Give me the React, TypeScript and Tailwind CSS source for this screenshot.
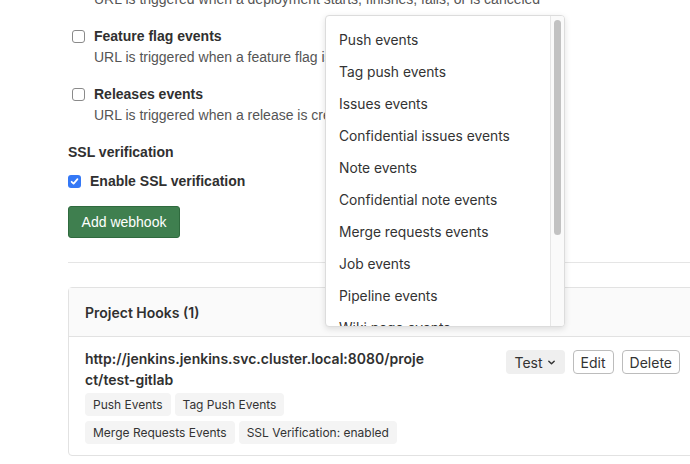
import React from 'react';

const formFont = { fontFamily: '"Liberation Sans", Arial, sans-serif' };
const uiFont = { fontFamily: 'Inter, "Liberation Sans", sans-serif' };

const triggerOptions = [
  'Push events',
  'Tag push events',
  'Issues events',
  'Confidential issues events',
  'Note events',
  'Confidential note events',
  'Merge requests events',
  'Job events',
  'Pipeline events',
  'Wiki page events',
];

const hookTags = [
  ['Push Events', 'Tag Push Events'],
  ['Merge Requests Events', 'SSL Verification: enabled'],
];

function Checkbox({ checked }: { checked?: boolean }) {
  if (checked) {
    return (
      <span className="flex h-[13px] w-[13px] shrink-0 items-center justify-center rounded-[3px] bg-[#3478f6]">
        <svg width="9" height="9" viewBox="0 0 10 10" fill="none">
          <path d="M1.8 5.3 4 7.4 8.3 2.4" stroke="white" strokeWidth="1.9" strokeLinecap="round" strokeLinejoin="round" />
        </svg>
      </span>
    );
  }
  return <span className="block h-[13px] w-[13px] shrink-0 rounded-[3px] border border-[#8a8a8a] bg-white" />;
}

function TriggerOption({ title, description }: { title: string; description: string }) {
  return (
    <div className="mt-[17px]">
      <div className="flex h-5 items-center gap-[9px] pl-1">
        <Checkbox />
        <span className="text-[14px] font-bold text-[#303030]">{title}</span>
      </div>
      <p className="mt-px pl-[26px] text-[14px] leading-5 text-[#555]">{description}</p>
    </div>
  );
}

function EventsMenu() {
  return (
    <div
      className="absolute left-[325px] top-[15px] flex h-[312px] w-[240px] overflow-hidden rounded-[4px] border border-[#dcdcdc] bg-white shadow-[0_2px_6px_rgba(0,0,0,0.12)]"
      style={uiFont}
    >
      <ul className="flex-1 pt-[8px]">
        {triggerOptions.map((opt) => (
          <li key={opt} className="flex h-8 items-center pl-[13px] text-[13.8px] text-[#333]">
            {opt}
          </li>
        ))}
      </ul>
      <div className="w-[14px] shrink-0 border-l border-[#e6e6e6] bg-[#fafafa] px-[3px] pt-1">
        <div className="h-[215px] rounded-full bg-[#c2c2c2]" />
      </div>
    </div>
  );
}

export default function App() {
  return (
    <div className="relative h-[464px] w-[690px] overflow-hidden bg-white" style={formFont}>
      <div className="-mt-[11px] ml-[68px] w-[629px]">
        <p className="pl-[26px] text-[14px] leading-5 text-[#555]">
          URL is triggered when a deployment starts, finishes, fails, or is canceled
        </p>
        <TriggerOption title="Feature flag events" description="URL is triggered when a feature flag is toggled" />
        <TriggerOption title="Releases events" description="URL is triggered when a release is created or updated" />

        <h4 className="mt-[17px] text-[14px] font-bold leading-5 text-[#303030]">SSL verification</h4>
        <label className="mt-[9px] flex h-5 items-center gap-[9px]">
          <Checkbox checked />
          <span className="text-[14px] font-bold text-[#303030]">Enable SSL verification</span>
        </label>

        <button className="mt-[15px] h-8 w-[112px] rounded-[3px] border border-[#2f6a3e] bg-[#3f7f4f] text-[14px] text-white">
          Add webhook
        </button>

        <hr className="mt-[24px] border-t border-[#e5e5e5]" />

        <section className="mt-[24px] rounded-[4px] border border-[#e2e2e2]" style={uiFont}>
          <header className="flex h-[49px] items-center border-b border-[#e2e2e2] bg-[#fafafa] px-4">
            <h5 className="text-[14px] font-semibold text-[#303030]">Project Hooks (1)</h5>
          </header>
          <div className="flex px-4 pb-[11px] pt-[11px]">
            <div className="w-[405px]">
              <div className="w-[340px] break-all text-[14px] font-semibold leading-[21px] text-[#303030]">
                http://jenkins.jenkins.svc.cluster.local:8080/project/test-gitlab
              </div>
              <div className="mt-[3px] flex flex-col gap-[5px]">
                {hookTags.map((row, i) => (
                  <div key={i} className="flex gap-1">
                    {row.map((tag) => (
                      <span key={tag} className="flex h-[23px] items-center rounded-[4px] bg-[#f4f4f4] px-2 text-[12px] text-[#333]">
                        {tag}
                      </span>
                    ))}
                  </div>
                ))}
              </div>
            </div>
            <div className="ml-auto mt-[2px] flex h-6 items-start gap-2">
              <button className="flex h-6 items-center gap-1 rounded-[4px] bg-[#efefef] px-[9px] text-[14px] text-[#333]">
                Test
                <svg width="9" height="9" viewBox="0 0 10 10" fill="none">
                  <path d="M2 3.5 5 6.5 8 3.5" stroke="#333" strokeWidth="1.6" strokeLinecap="round" strokeLinejoin="round" />
                </svg>
              </button>
              <button className="h-6 rounded-[4px] border border-[#bcbcbc] bg-white px-[7px] text-[14px] text-[#333]">Edit</button>
              <button className="h-6 rounded-[4px] border border-[#bcbcbc] bg-white px-[7px] text-[14px] text-[#333]">Delete</button>
            </div>
          </div>
        </section>
      </div>
      <EventsMenu />
    </div>
  );
}
